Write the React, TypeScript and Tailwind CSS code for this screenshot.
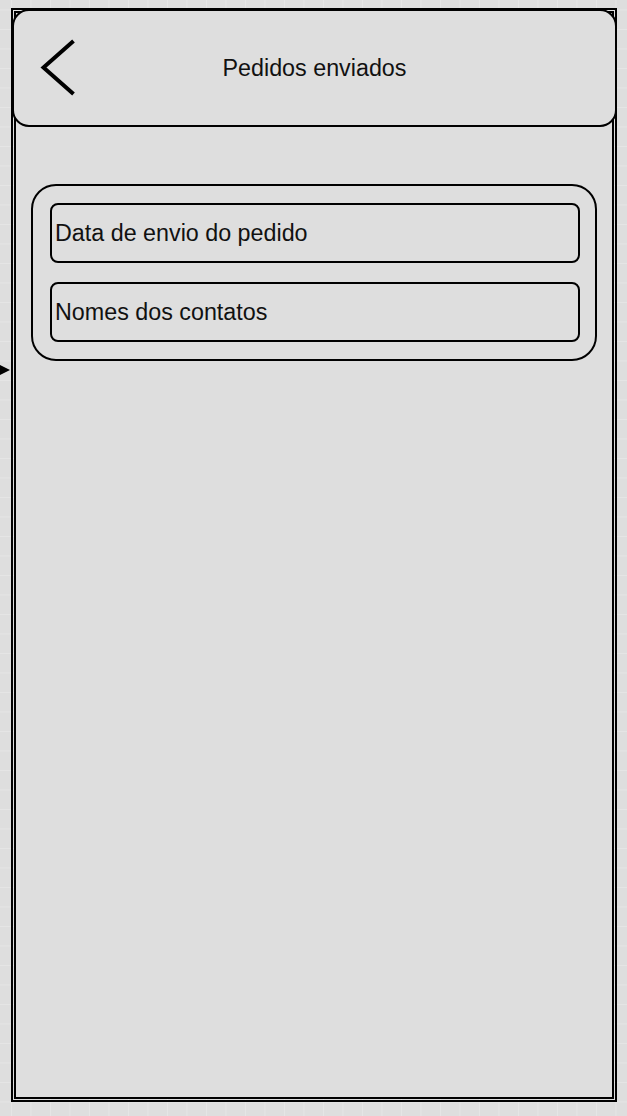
import React from 'react';

const items = ['Data de envio do pedido', 'Nomes dos contatos'];

export default function App() {
    return (
        <div className="relative w-[627px] h-[1116px] overflow-hidden bg-[#dedede] bg-[linear-gradient(to_right,#e5e5e5_1px,transparent_1px),linear-gradient(to_bottom,#e5e5e5_1px,transparent_1px)] bg-[size:19.5px_19.5px] bg-[position:11px_9.5px] pt-[8px] pl-[11px] font-['Liberation_Sans',Arial,sans-serif] text-[#111]">
            {/* connector arrow coming from the left */}
            <svg className="absolute left-0 top-[364px]" width="11" height="12" viewBox="0 0 11 12">
                <polygon points="0,1 10,6 0,11" fill="#000" />
            </svg>

            {/* phone frame, double border */}
            <div className="w-[606px] h-[1094px] border-2 border-black p-px">
                <div className="h-full w-full border-2 border-black bg-[#dedede] flex flex-col">
                    {/* Header */}
                    <div className="w-[605px] h-[118px] -ml-[4px] -mt-[4px] shrink-0 rounded-[17px] border-2 border-black bg-[#dedede] grid grid-cols-[1fr_auto_1fr] items-center">
                        <svg className="ml-[24px]" width="40" height="60" viewBox="0 0 40 60">
                            <polyline points="35.5,3 5.5,29.5 35.5,56" fill="none" stroke="#000" strokeWidth="4" />
                        </svg>
                        <h1 className="text-[23.3px] leading-[26px]">Pedidos enviados</h1>
                        <div />
                    </div>

                    {/* Card */}
                    <div className="ml-[15px] mt-[57px] w-[566px] rounded-[25px] border-2 border-black pl-[17px] pt-[17px] pb-[17px] flex flex-col gap-[19px]">
                        {items.map((label) => (
                            <div key={label} className="w-[530px] h-[60px] rounded-[8px] border-2 border-black flex items-center pl-[3px]">
                                <span className="text-[23.3px] leading-[26px]">{label}</span>
                            </div>
                        ))}
                    </div>
                </div>
            </div>
        </div>
    );
}
